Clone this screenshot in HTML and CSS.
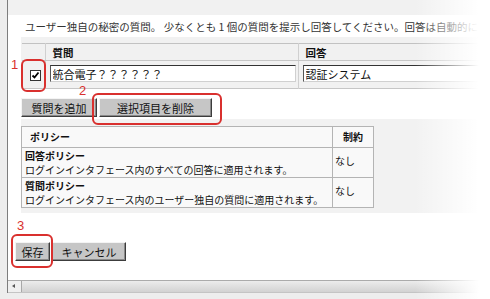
FILE: index.html
```html
<!DOCTYPE html>
<html>
<head>
	<title>秘密の質問</title>
	<meta charset="utf-8">
	<link rel="stylesheet" href="styles.css">
</head>
<body>
	<div class="frame">
		<div class="page">
			<div class="topbar"></div>
			<div class="content">
				<p class="intro">ユーザー独自の秘密の質問。 少なくとも 1 個の質問を提示し回答してください。回答は自動的に大文字と小文字が区別されます。</p>

				<div class="qpanel">
					<table class="qtable">
						<tr>
							<th class="sel"></th>
							<th class="q">質問</th>
							<th class="a">回答</th>
						</tr>
						<tr>
							<td class="sel">
								<span class="check">
									<svg width="9" height="9" viewBox="0 0 9 9"><path d="M1.5 4.5 L3.5 6.5 L7.5 1.5" fill="none" stroke="#000" stroke-width="1.8"/></svg>
								</span>
							</td>
							<td class="q"><input class="field qfield" type="text" value="統合電子？？？？？？"></td>
							<td class="a"><input class="field afield" type="text" value="認証システム"></td>
						</tr>
					</table>
				</div>

				<div class="btnrow">
					<button class="btn add">質問を追加</button>
					<button class="btn del">選択項目を削除</button>
				</div>

				<div class="ppanel">
					<table class="ptable">
						<tr class="phead">
							<th class="pname">ポリシー</th>
							<th class="plimit">制約</th>
						</tr>
						<tr class="prow">
							<td>
								<div class="ptitle">回答ポリシー</div>
								<div class="pdesc">ログインインタフェース内のすべての回答に適用されます。</div>
							</td>
							<td class="val">なし</td>
						</tr>
						<tr class="prow">
							<td>
								<div class="ptitle">質問ポリシー</div>
								<div class="pdesc">ログインインタフェース内のユーザー独自の質問に適用されます。</div>
							</td>
							<td class="val">なし</td>
						</tr>
					</table>
				</div>

				<div class="actions">
					<button class="btn save">保存</button>
					<button class="btn cancel">キャンセル</button>
				</div>
			</div>
			<div class="hscroll">
				<span class="arrow"></span>
				<span class="track"></span>
			</div>
		</div>

		<!-- callouts drawn over the screen -->
		<div class="mark mark1"></div>
		<div class="mark mark2"></div>
		<div class="mark mark3"></div>
		<span class="num num1">1</span>
		<span class="num num2">2</span>
		<span class="num num3">3</span>

		<div class="fade"></div>
	</div>
</body>
</html>
```

FILE: styles.css
```css
body {
	margin: 0;
	background: #fff;
	font-family: "Noto Sans CJK JP", "DejaVu Sans", sans-serif;
	color: #111;
}

.frame {
	position: relative;
	width: 490px;
	height: 299px;
	overflow: hidden;
	background: #ededed;
	padding-left: 7px;
	box-sizing: border-box;
}

.page {
	height: 293px;
	border-left: 1px solid #7d7d7d;
	background: #fff;
	display: flex;
	flex-direction: column;
}

.topbar {
	height: 15px;
	background: #f1f1f1;
	flex-shrink: 0;
}

.content {
	flex: 1;
	padding-left: 13px;
}

.intro {
	margin: 0;
	height: 22px;
	line-height: 24px;
	padding-left: 4px;
	font-size: 10.5px;
	white-space: nowrap;
	color: #333;
}

/* question table */
.qpanel {
	width: 600px;
	background: #f1f1f1;
	padding-top: 6px;
}

.qtable {
	border-collapse: collapse;
	margin-left: 1px;
	border-top: 1px solid #c2c2c2;
	border-bottom: 1px solid #c6c6c6;
}

.qtable th {
	height: 16px;
	padding: 0 0 0 7px;
	font-size: 10.5px;
	font-weight: bold;
	text-align: left;
	border-bottom: 1px solid #c6c6c6;
}

.qtable td {
	height: 28px;
	padding: 4px 0 0 4px;
	vertical-align: top;
	box-sizing: border-box;
}

.qtable .sel {
	width: 23px;
	padding: 0;
	border-right: 1px solid #d0d0d0;
	box-sizing: border-box;
}

.qtable td.sel {
	padding: 9px 0 0 8px;
}

.qtable .q {
	width: 253px;
	border-right: 1px solid #d0d0d0;
	box-sizing: border-box;
}

.qtable .a {
	width: 300px;
}

.check {
	display: block;
	width: 11px;
	height: 11px;
	border: 1px solid #333;
	background: #fff;
	box-sizing: border-box;
}

.check svg {
	display: block;
}

.field {
	display: block;
	height: 17px;
	padding: 0 2px;
	border: 1px solid;
	border-color: #333 #d0d0d0 #d0d0d0 #555;
	background: #fff;
	font-family: "Noto Sans CJK JP", sans-serif;
	font-size: 11px;
	color: #111;
	box-sizing: border-box;
	outline: none;
}

.qfield {
	width: 246px;
}

.afield {
	width: 260px;
}

/* buttons */
.btnrow {
	display: flex;
	gap: 2px;
	margin-top: 9px;
}

.btn {
	height: 19px;
	padding: 0;
	background: #c6c6c6;
	border: 1px solid;
	border-color: #f4f4f4 #3c3c3c #3c3c3c #f4f4f4;
	font-family: "Noto Sans CJK JP", sans-serif;
	font-size: 11px;
	color: #111;
	box-shadow: inset -1px -1px 0 #8a8a8a;
}

.add { width: 76px; }
.del { width: 113px; }
.save { width: 35px; }
.cancel { width: 74px; }

/* policy table */
.ppanel {
	width: 460px;
	margin-top: 2px;
	padding: 7px 0 5px 0;
	background: #f2f2f2;
}

.ptable {
	width: 353px;
	border-collapse: collapse;
	border: 1px solid #a4a4a4;
	background: #f9f9f9;
	font-size: 10px;
}

.ptable th {
	padding: 0;
	font-weight: bold;
	line-height: 14px;
	border: 1px solid #b4b4b4;
}

.phead {
	height: 21px;
}

.prow {
	height: 30px;
}

.ptable .pname {
	text-align: left;
	padding-left: 8px;
}

.ptable .plimit {
	width: 40px;
	text-align: center;
}

.ptable td {
	padding: 0 3px;
	border: 1px solid #b4b4b4;
	vertical-align: middle;
}

.ptitle,
.pdesc {
	height: 14px;
	line-height: 14px;
	white-space: nowrap;
}

.ptitle {
	font-weight: bold;
}

.ptable td.val {
	padding: 0 2px 3px 2px;
	line-height: 14px;
}

.actions {
	display: flex;
	gap: 2px;
	margin: 29px 0 0 -6px;
}

/* horizontal scrollbar */
.hscroll {
	height: 13px;
	display: flex;
	border-top: 1px solid #ababab;
	border-bottom: 1px solid #c4c4c4;
	background: linear-gradient(#ececec, #d2d2d2);
	flex-shrink: 0;
	box-sizing: border-box;
}

.arrow {
	width: 13px;
	border-right: 1px solid #a8a8a8;
	background: #efefef;
	position: relative;
}

.arrow::before {
	content: "";
	position: absolute;
	left: 4px;
	top: 3px;
	border-style: solid;
	border-width: 2.5px 3px 2.5px 0;
	border-color: transparent #555 transparent transparent;
}

.track {
	flex: 1;
}

/* red callouts */
.mark {
	position: absolute;
	border: 2px solid #d9302e;
	border-radius: 6px;
	box-sizing: border-box;
}

.mark1 { left: 21px; top: 59px; width: 25px; height: 33px; }
.mark2 { left: 92px; top: 93px; width: 130px; height: 32px; }
.mark3 { left: 11px; top: 234px; width: 42px; height: 34px; }

.num {
	position: absolute;
	color: #d9302e;
	font-family: "Liberation Sans", sans-serif;
	font-size: 13px;
	line-height: 13px;
}

.num1 { left: 11px; top: 58px; }
.num2 { left: 79px; top: 84px; }
.num3 { left: 17px; top: 219px; }

.fade {
	position: absolute;
	top: 0;
	right: 0;
	width: 75px;
	height: 100%;
	background: linear-gradient(to right, rgba(255,255,255,0), #fff 85%);
}
```
